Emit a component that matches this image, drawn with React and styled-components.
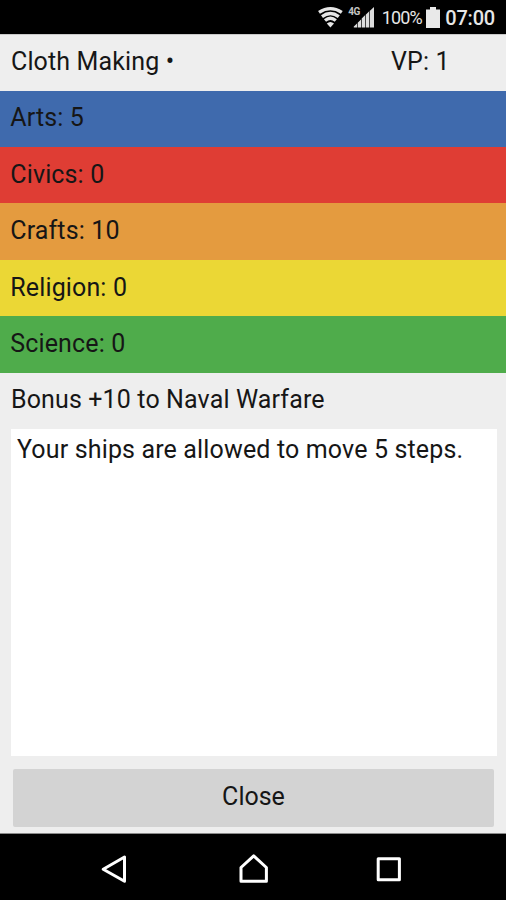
import styled, { createGlobalStyle } from "styled-components";

const GlobalStyle = createGlobalStyle`
  *, *::before, *::after {
    box-sizing: border-box;
  }

  body {
    margin: 0;
    background-color: #000;
    font-family: "Roboto", sans-serif;
  }
`;

const Screen = styled.div`
  width: 506px;
  height: 900px;
  display: flex;
  flex-direction: column;
  overflow: hidden;
  background-color: #eeeeee;
`;

const StatusBar = styled.header`
  height: 34px;
  flex: none;
  display: flex;
  justify-content: flex-end;
  align-items: center;
  padding: 1px 11px 0 0;
  background-color: #000;
  color: #e6e6e6;
`;

const StatusIcons = styled.svg`
  display: block;
  margin-right: 7px;
`;

const NetworkLabel = styled.text`
  font-size: 10px;
  font-weight: 700;
  letter-spacing: -0.5px;
  fill: #c4c4c4;
`;

const BatteryLevel = styled.span`
  margin-right: 4.5px;
  font-size: 18px;
  letter-spacing: -0.9px;
`;

const BatteryIcon = styled.svg`
  display: block;
  margin-right: 5px;
`;

const Clock = styled.span`
  font-size: 20px;
  font-weight: 500;
  letter-spacing: -0.2px;
`;

const Content = styled.main`
  flex: 1;
  display: flex;
  flex-direction: column;
  border-top: 1px solid #c9c9c9;
  border-bottom: 1px solid #8a8a8a;
  color: #161616;
  font-size: 25px;
  line-height: 30px;
`;

const Row = styled.div`
  height: ${({ color }) => (color ? "56.4px" : "55.6px")};
  flex: none;
  display: flex;
  padding: ${({ color }) => (color ? "12.9px 10.3px 0" : "12px 11px 0")};
  background-color: ${({ color }) => color || "transparent"};
  letter-spacing: 0.13px;
  white-space: nowrap;
`;

const Name = styled.span`
  width: 380px;
`;

const Description = styled.div`
  flex: 1;
  margin: 0.8px 9px 0 11px;
  padding: 5.6px 6px;
  background-color: #fff;
  letter-spacing: 0.15px;
`;

const CloseButton = styled.button`
  height: 58px;
  flex: none;
  margin: 12.5px 12px 6.5px 13px;
  padding: 0 0 1px;
  border: none;
  border-radius: 2px;
  background-color: #d3d3d3;
  color: #161616;
  font-family: "Roboto", sans-serif;
  font-size: 25px;
  line-height: 30px;
`;

const NavigationBar = styled.nav`
  height: 66px;
  flex: none;
  display: flex;
  justify-content: center;
  align-items: center;
  padding-top: 4px;
  background-color: #000;
`;

const NavIcon = styled.svg`
  flex: none;
  width: 137.5px;
  height: 32px;
  fill: none;
  stroke: #fff;
  stroke-width: 3;
  stroke-linejoin: round;
`;

const categories = [
  { name: "Arts", value: 5, color: "#3f6aad" },
  { name: "Civics", value: 0, color: "#df3d34" },
  { name: "Crafts", value: 10, color: "#e49b3f" },
  { name: "Religion", value: 0, color: "#ebd735" },
  { name: "Science", value: 0, color: "#4fac4b" },
];

const Status = () => (
  <StatusBar>
    <StatusIcons width="58" height="24" viewBox="0 0 58 24">
      <g fill="none" stroke="#e6e6e6" strokeWidth="3.3">
        <path d="M2 6.4Q13.4 -1.2 24.8 6.4" />
        <path d="M5 10.6Q13.4 4.4 21.8 10.6" />
        <path d="M8 14.6Q13.4 10 18.8 14.6" />
      </g>
      <path d="M9.8 17.4Q13.4 14.4 17 17.4L13.4 21.5Z" fill="#e6e6e6" />
      <NetworkLabel x="31.3" y="8.5">
        4G
      </NetworkLabel>
      <path
        d="M36.8 21.5V20.5L40 17.5V21.5ZM40.7 21.5V16.8L44 13.5V21.5ZM44.7 21.5V12.6L48 9.3V21.5ZM48.7 21.5V8.7L52 5.4V21.5ZM52.7 21.5V5L57 1V21.5Z"
        fill="#dcdcdc"
      />
    </StatusIcons>
    <BatteryLevel>100%</BatteryLevel>
    <BatteryIcon width="14" height="21" viewBox="0 0 14 21">
      <path d="M4 0H10V2.5H14V21H0V2.5H4Z" fill="#e9e9e9" />
    </BatteryIcon>
    <Clock>07:00</Clock>
  </StatusBar>
);

const App = () => {
  return (
    <>
      <GlobalStyle />
      <Screen>
        <Status />
        <Content>
          <Row>
            <Name>Cloth Making •</Name>
            <span>VP: 1</span>
          </Row>
          {categories.map(({ name, value, color }) => (
            <Row key={name} color={color}>
              {name}: {value}
            </Row>
          ))}
          <Row>Bonus +10 to Naval Warfare</Row>
          <Description>Your ships are allowed to move 5 steps.</Description>
          <CloseButton>Close</CloseButton>
        </Content>
        <NavigationBar>
          <NavIcon viewBox="0 0 137.5 32">
            <path d="M77.5 4V28.3L56.2 16.2Z" />
          </NavIcon>
          <NavIcon viewBox="0 0 137.5 32">
            <path d="M57 28.2V14.5L69.7 2.9L82.4 14.5V28.2Z" />
          </NavIcon>
          <NavIcon viewBox="0 0 137.5 32">
            <rect x="56.2" y="5.8" width="21.2" height="21" />
          </NavIcon>
        </NavigationBar>
      </Screen>
    </>
  );
};

export default App;
